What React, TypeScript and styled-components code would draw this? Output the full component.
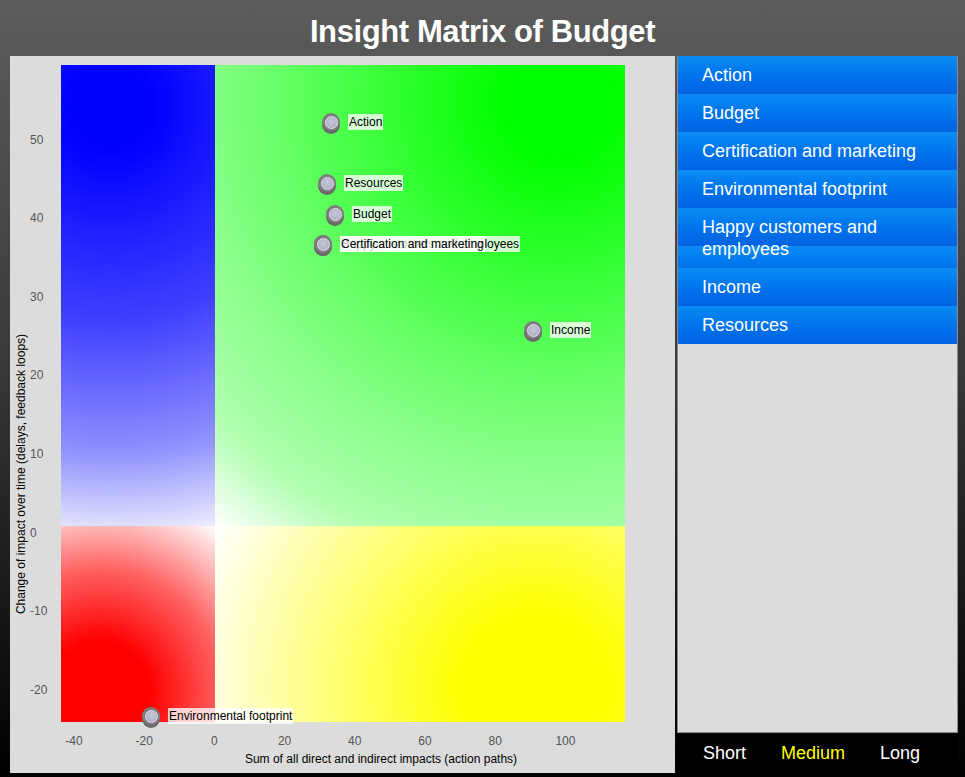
import React from 'react';
import styled, { createGlobalStyle } from 'styled-components';

const GlobalStyle = createGlobalStyle`
  html, body {
    margin: 0;
    padding: 0;
    height: 100%;
  }
  body {
    background: linear-gradient(#5c5c5c 0%, #3a3a3a 45%, #000 100%);
    font-family: "Liberation Sans", Arial, sans-serif;
    overflow: hidden;
  }
`;

interface IQuadrantProps {
  tone: 'blue' | 'green' | 'red' | 'yellow';
}

interface ITimeProps {
  active?: boolean;
}

const gradients = {
  blue: 'radial-gradient(circle farthest-corner at 32% 9%, #0000ff 0%, #0000ff 10%, #4040ff 50%, #9090ff 80%, #ffffff 104%)',
  green: 'radial-gradient(circle farthest-corner at 84% 8%, #00ff00 0%, #00ff00 10%, #7dff7d 60%, #b0ffb0 85%, #ffffff 100%)',
  red: 'radial-gradient(circle farthest-corner at 25% 84%, #ff0000 0%, #ff0000 25%, #ff6060 60%, #ffffff 100%)',
  yellow: 'radial-gradient(circle farthest-corner at 78% 82%, #ffff00 0%, #ffff00 20%, #ffff60 50%, #ffffff 100%)',
};

const Page = styled.div`
  width: 965px;
  height: 777px;
  display: flex;
  flex-direction: column;
`;

const Header = styled.h1`
  margin: 0;
  height: 56px;
  line-height: 64px;
  text-align: center;
  color: #fff;
  font-size: 31px;
  font-weight: bold;
  letter-spacing: -0.4px;
`;

const Body = styled.div`
  display: flex;
  align-items: flex-start;
  padding-left: 10px;
`;

const ChartPanel = styled.div`
  width: 665px;
  height: 717px;
  background: #dcdcdc;
  display: grid;
  grid-template-columns: 51px 564px 50px;
  grid-template-rows: 9px 657px 51px;
`;

const YAxis = styled.div`
  grid-column: 1;
  grid-row: 2;
  position: relative;
`;

const YTitle = styled.div`
  position: absolute;
  left: 11px;
  top: 409px;
  transform: translate(-50%, -50%) rotate(-90deg);
  white-space: nowrap;
  font-size: 12px;
  color: #000;
`;

const YTick = styled.span`
  position: absolute;
  left: 20px;
  transform: translateY(-50%);
  font-size: 12px;
  color: #555;
`;

const XAxis = styled.div`
  grid-column: 2;
  grid-row: 3;
  position: relative;
`;

const XTick = styled.span`
  position: absolute;
  top: 12px;
  transform: translateX(-50%);
  font-size: 12px;
  color: #555;
`;

const XTitle = styled.div`
  position: absolute;
  left: 38px;
  width: 564px;
  top: 30px;
  text-align: center;
  font-size: 12px;
  color: #000;
`;

const Plot = styled.div`
  grid-column: 2;
  grid-row: 2;
  position: relative;
  display: grid;
  grid-template-columns: 154px 410px;
  grid-template-rows: 461px 196px;
`;

const Quadrant = styled.div<IQuadrantProps>`
  background: ${props => gradients[props.tone]};
`;

const Marker = styled.div`
  position: absolute;
  display: flex;
  align-items: center;
  transform: translate(-9px, -10px);
`;

const Dot = styled.div`
  width: 18px;
  height: 18px;
  border-radius: 50%;
  background: #7d7d7d;
  box-shadow: 0 3px 0 #6a6a6a;
  display: flex;
  align-items: center;
  justify-content: center;
`;

const DotCore = styled.div`
  width: 11px;
  height: 11px;
  border-radius: 50%;
  background: radial-gradient(circle at 50% 40%, #c8c8da, #a6a6be);
  border: 1px solid #e2e2ea;
`;

const Label = styled.span`
  margin-left: 8px;
  font-size: 12px;
  line-height: 16px;
  padding: 0 1px;
  color: #000;
  background: rgba(255, 255, 255, 0.78);
  white-space: nowrap;
`;

const Side = styled.div`
  margin-left: 2px;
  width: 281px;
  display: flex;
  flex-direction: column;
`;

const List = styled.div`
  height: 676px;
  background: #dcdcdc;
  border: 1px solid #8a8a8a;
  border-top: none;
  display: flex;
  flex-direction: column;
`;

const Item = styled.div`
  padding: 8px 20px 8px 24px;
  font-size: 18px;
  line-height: 22px;
  color: #fff;
  background: linear-gradient(#0a8cf4 0%, #0074ec 50%, #0062e2 100%);
  background-size: 100% 38px;
`;

const TimeBar = styled.div`
  height: 40px;
  display: flex;
  align-items: center;
  padding: 0 0 0 26px;
  gap: 35px;
  background: #000;
`;

const TimeOption = styled.span<ITimeProps>`
  font-size: 18px;
  color: ${props => (props.active ? '#ffff00' : '#fff')};
`;

const points = [
  { name: 'Happy customers and employees', x: 262, y: 180 },
  { name: 'Action', x: 270, y: 58 },
  { name: 'Resources', x: 266, y: 119 },
  { name: 'Budget', x: 274, y: 150 },
  { name: 'Certification and marketing', x: 262, y: 180 },
  { name: 'Income', x: 472, y: 266 },
  { name: 'Environmental footprint', x: 90, y: 652 },
];

const yTicks = [
  { v: '50', y: 75 },
  { v: '40', y: 153 },
  { v: '30', y: 232 },
  { v: '20', y: 310 },
  { v: '10', y: 389 },
  { v: '0', y: 468 },
  { v: '-10', y: 546 },
  { v: '-20', y: 625 },
];

const xTicks = ['-40', '-20', '0', '20', '40', '60', '80', '100'];

const items = [
  'Action',
  'Budget',
  'Certification and marketing',
  'Environmental footprint',
  'Happy customers and employees',
  'Income',
  'Resources',
];

const App = (): JSX.Element => {
  return (
    <Page>
      <GlobalStyle />
      <Header>Insight Matrix of Budget</Header>
      <Body>
        <ChartPanel>
          <YAxis>
            <YTitle>Change of impact over time (delays, feedback loops)</YTitle>
            {yTicks.map(t => (
              <YTick key={t.v} style={{ top: t.y }}>{t.v}</YTick>
            ))}
          </YAxis>
          <Plot>
            <Quadrant tone="blue" />
            <Quadrant tone="green" />
            <Quadrant tone="red" />
            <Quadrant tone="yellow" />
            {points.map(p => (
              <Marker key={p.name} style={{ left: p.x, top: p.y }}>
                <Dot><DotCore /></Dot>
                <Label>{p.name}</Label>
              </Marker>
            ))}
          </Plot>
          <XAxis>
            {xTicks.map((t, i) => (
              <XTick key={t} style={{ left: 13 + i * 70.2 }}>{t}</XTick>
            ))}
            <XTitle>Sum of all direct and indirect impacts (action paths)</XTitle>
          </XAxis>
        </ChartPanel>
        <Side>
          <List>
            {items.map(name => (
              <Item key={name}>{name}</Item>
            ))}
          </List>
          <TimeBar>
            <TimeOption>Short</TimeOption>
            <TimeOption active>Medium</TimeOption>
            <TimeOption>Long</TimeOption>
          </TimeBar>
        </Side>
      </Body>
    </Page>
  );
};

export default App;
